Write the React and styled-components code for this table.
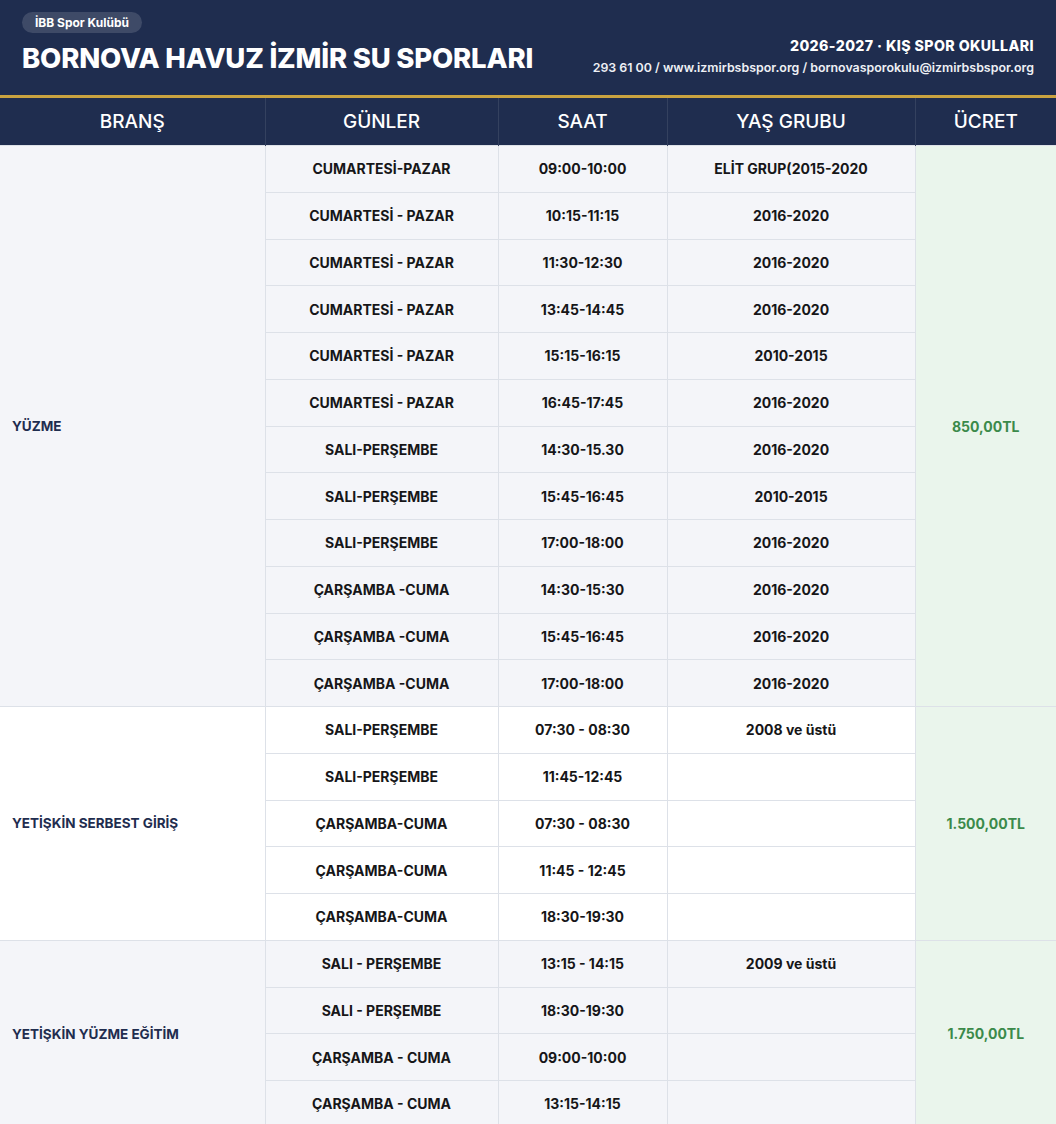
import React from "react";
import styled, { createGlobalStyle } from "styled-components";

const GlobalStyle = createGlobalStyle`
  body {
    margin: 0;
    background: #ffffff;
    font-family: Inter, "Noto Sans", "Liberation Sans", sans-serif;
  }
`;

const sections = [
  {
    name: "YÜZME",
    price: "850,00TL",
    shade: true,
    rows: [
      ["CUMARTESİ-PAZAR", "09:00-10:00", "ELİT GRUP(2015-2020"],
      ["CUMARTESİ - PAZAR", "10:15-11:15", "2016-2020"],
      ["CUMARTESİ - PAZAR", "11:30-12:30", "2016-2020"],
      ["CUMARTESİ - PAZAR", "13:45-14:45", "2016-2020"],
      ["CUMARTESİ - PAZAR", "15:15-16:15", "2010-2015"],
      ["CUMARTESİ - PAZAR", "16:45-17:45", "2016-2020"],
      ["SALI-PERŞEMBE", "14:30-15.30", "2016-2020"],
      ["SALI-PERŞEMBE", "15:45-16:45", "2010-2015"],
      ["SALI-PERŞEMBE", "17:00-18:00", "2016-2020"],
      ["ÇARŞAMBA -CUMA", "14:30-15:30", "2016-2020"],
      ["ÇARŞAMBA -CUMA", "15:45-16:45", "2016-2020"],
      ["ÇARŞAMBA -CUMA", "17:00-18:00", "2016-2020"],
    ],
  },
  {
    name: "YETİŞKİN SERBEST GİRİŞ",
    price: "1.500,00TL",
    shade: false,
    rows: [
      ["SALI-PERŞEMBE", "07:30 - 08:30", "2008 ve üstü"],
      ["SALI-PERŞEMBE", "11:45-12:45", ""],
      ["ÇARŞAMBA-CUMA", "07:30 - 08:30", ""],
      ["ÇARŞAMBA-CUMA", "11:45 - 12:45", ""],
      ["ÇARŞAMBA-CUMA", "18:30-19:30", ""],
    ],
  },
  {
    name: "YETİŞKİN YÜZME EĞİTİM",
    price: "1.750,00TL",
    shade: true,
    rows: [
      ["SALI - PERŞEMBE", "13:15 - 14:15", "2009 ve üstü"],
      ["SALI - PERŞEMBE", "18:30-19:30", ""],
      ["ÇARŞAMBA - CUMA", "09:00-10:00", ""],
      ["ÇARŞAMBA - CUMA", "13:15-14:15", ""],
    ],
  },
];

const Page = styled.div`
  width: 1056px;
  overflow: hidden;
`;

const Header = styled.header`
  display: flex;
  justify-content: space-between;
  align-items: flex-end;
  background: #1f2d4f;
  padding: 11px 22px 20px 22px;
  height: 98px;
  box-sizing: border-box;
  border-bottom: 3px solid #c9a240;
`;

const Brand = styled.div`
  display: flex;
  flex-direction: column;
  align-items: flex-start;
  gap: 8px;
`;

const Badge = styled.span`
  background: rgba(255, 255, 255, 0.14);
  color: #ffffff;
  font-size: 12px;
  font-weight: 700;
  padding: 4px 13px;
  border-radius: 11px;
  line-height: 13px;
`;

const Title = styled.h1`
  margin: 0;
  color: #ffffff;
  font-size: 27.5px;
  font-weight: 800;
  letter-spacing: -0.2px;
  line-height: 34px;
`;

const Info = styled.div`
  display: flex;
  flex-direction: column;
  align-items: flex-end;
  gap: 6px;
  color: #ffffff;
`;

const Season = styled.div`
  font-size: 14.2px;
  font-weight: 800;
  letter-spacing: 0.4px;
`;

const Contact = styled.div`
  font-size: 12.4px;
  font-weight: 600;
  color: #eef0f5;
`;

const Table = styled.table`
  width: 1056px;
  border-collapse: collapse;
  table-layout: fixed;
`;

const Th = styled.th`
  background: #1f2d4f;
  color: #ffffff;
  font-size: 19px;
  font-weight: 500;
  height: 47px;
  padding: 0;
  text-align: center;
  border-left: 1px solid #34415f;
  &:first-child {
    border-left: none;
  }
`;

const Td = styled.td`
  height: 45.75px;
  padding: 0 8px;
  text-align: center;
  font-size: 14px;
  font-weight: 700;
  color: #161618;
  background: ${(p) => (p.$shade ? "#f4f5f9" : "#ffffff")};
  border: 1px solid #dde1e8;
`;

const BranchCell = styled(Td)`
  text-align: left;
  padding-left: 12px;
  color: #1f2d4f;
  font-size: 13.5px;
  border-left: none;
`;

const PriceCell = styled(Td)`
  background: #eaf5ec;
  color: #3b8a4a;
  font-size: 14px;
  border-right: none;
`;

export default function App() {
  return (
    <Page>
      <GlobalStyle />
      <Header>
        <Brand>
          <Badge>İBB Spor Kulübü</Badge>
          <Title>BORNOVA HAVUZ İZMİR SU SPORLARI</Title>
        </Brand>
        <Info>
          <Season>2026-2027 · KIŞ SPOR OKULLARI</Season>
          <Contact>
            293 61 00 / www.izmirbsbspor.org / bornovasporokulu@izmirbsbspor.org
          </Contact>
        </Info>
      </Header>
      <Table>
        <colgroup>
          <col style={{ width: 265 }} />
          <col style={{ width: 233 }} />
          <col style={{ width: 169 }} />
          <col style={{ width: 248 }} />
          <col style={{ width: 141 }} />
        </colgroup>
        <thead>
          <tr>
            <Th>BRANŞ</Th>
            <Th>GÜNLER</Th>
            <Th>SAAT</Th>
            <Th>YAŞ GRUBU</Th>
            <Th>ÜCRET</Th>
          </tr>
        </thead>
        <tbody>
          {sections.map((s) =>
            s.rows.map((r, i) => (
              <tr key={s.name + i}>
                {i === 0 && (
                  <BranchCell rowSpan={s.rows.length} $shade={s.shade}>
                    {s.name}
                  </BranchCell>
                )}
                <Td $shade={s.shade}>{r[0]}</Td>
                <Td $shade={s.shade}>{r[1]}</Td>
                <Td $shade={s.shade}>{r[2]}</Td>
                {i === 0 && (
                  <PriceCell rowSpan={s.rows.length}>{s.price}</PriceCell>
                )}
              </tr>
            ))
          )}
        </tbody>
      </Table>
    </Page>
  );
}
